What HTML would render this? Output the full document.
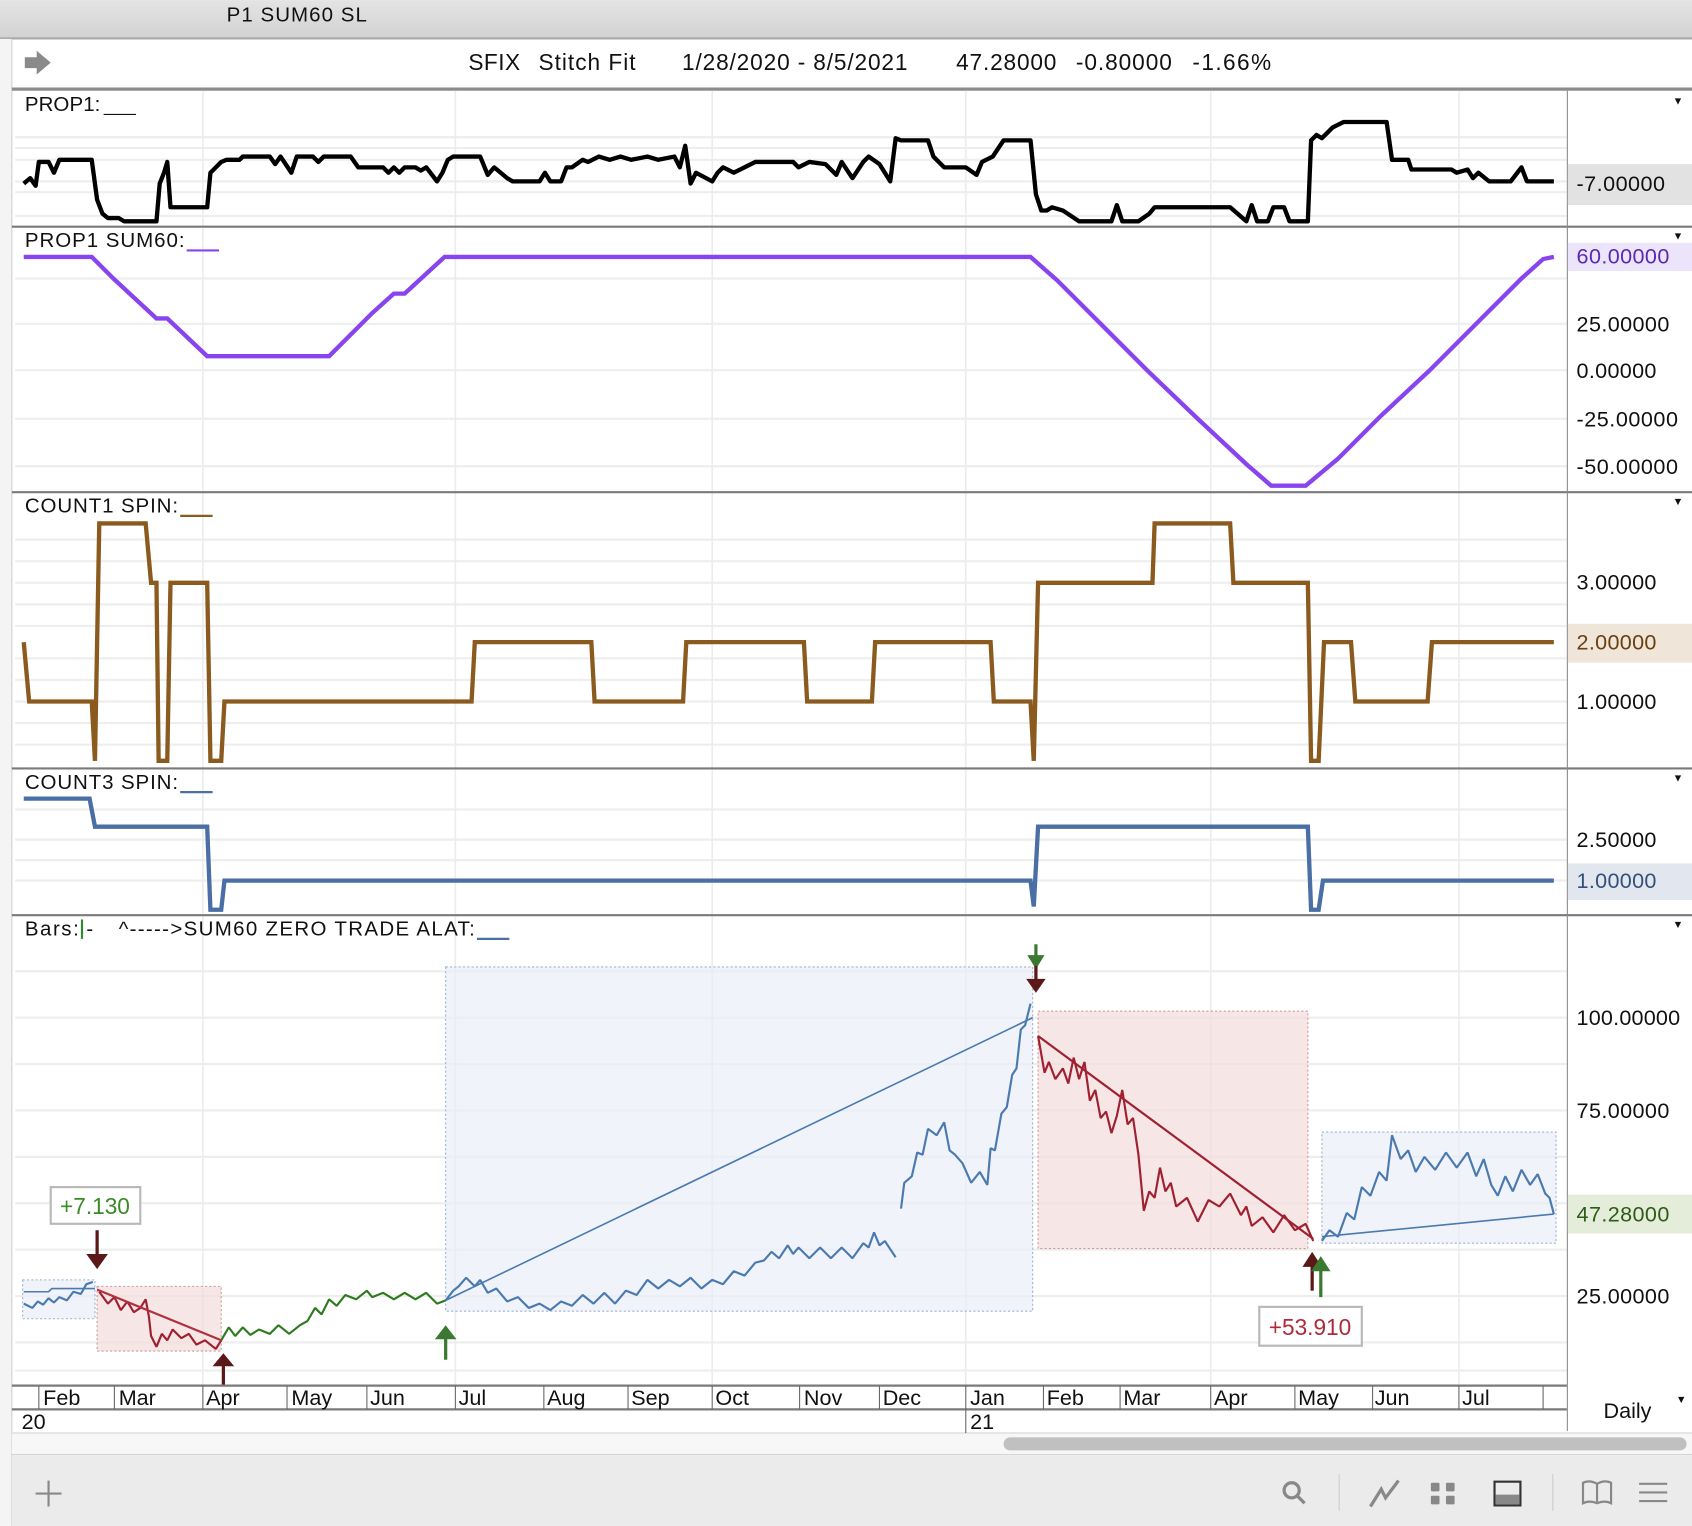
<!DOCTYPE html>
<html><head><meta charset="utf-8"><style>
html,body{margin:0;padding:0;background:#fff;overflow:hidden}
svg{display:block}
text{font-family:"Liberation Sans",sans-serif}
</style></head><body>
<svg width="1692" height="1526" viewBox="0 0 1568 1414" xmlns="http://www.w3.org/2000/svg">
<defs>
<linearGradient id="tb" x1="0" y1="0" x2="0" y2="1"><stop offset="0" stop-color="#e4e4e4"/><stop offset="1" stop-color="#d2d2d2"/></linearGradient>
</defs>
<rect width="1568" height="1414" fill="#fff"/>
<rect x="0" y="0" width="1568" height="35" fill="url(#tb)"/>
<line x1="0" y1="35.5" x2="1568" y2="35.5" stroke="#a8a8a8" stroke-width="2"/>
<text x="210" y="20" font-size="19" fill="#111" textLength="130">P1 SUM60 SL</text>
<rect x="0" y="36" width="11" height="1378" fill="#f4f4f4"/>
<line x1="11" y1="36" x2="11" y2="1414" stroke="#cfcfcf"/>
<polygon points="23,53 34,53 34,47 47,58 34,69 34,63 23,63" fill="#8a8a8a"/>
<g font-size="21" fill="#111">
<text x="434" y="65" textLength="48">SFIX</text>
<text x="499" y="65" textLength="90">Stitch Fit</text>
<text x="632" y="65" textLength="209">1/28/2020 - 8/5/2021</text>
<text x="886" y="65" textLength="93">47.28000</text>
<text x="997" y="65" textLength="89">-0.80000</text>
<text x="1105" y="65" textLength="73">-1.66%</text>
</g>
<rect x="11" y="81" width="1557" height="3" fill="#8c8c8c"/>

<g stroke="#eeeeee" stroke-width="2">
<line x1="14" x2="1452" y1="127" y2="127"/><line x1="14" x2="1452" y1="137" y2="137"/><line x1="14" x2="1452" y1="148" y2="148"/><line x1="14" x2="1452" y1="168" y2="168"/><line x1="14" x2="1452" y1="178" y2="178"/><line x1="14" x2="1452" y1="200" y2="200"/>
<line x1="14" x2="1452" y1="258" y2="258"/><line x1="14" x2="1452" y1="300" y2="300"/><line x1="14" x2="1452" y1="343" y2="343"/><line x1="14" x2="1452" y1="388" y2="388"/><line x1="14" x2="1452" y1="432" y2="432"/>
<line x1="14" x2="1452" y1="500" y2="500"/><line x1="14" x2="1452" y1="520" y2="520"/><line x1="14" x2="1452" y1="540" y2="540"/><line x1="14" x2="1452" y1="560" y2="560"/><line x1="14" x2="1452" y1="580" y2="580"/><line x1="14" x2="1452" y1="610" y2="610"/><line x1="14" x2="1452" y1="630" y2="630"/><line x1="14" x2="1452" y1="650" y2="650"/><line x1="14" x2="1452" y1="670" y2="670"/><line x1="14" x2="1452" y1="690" y2="690"/>
<line x1="14" x2="1452" y1="750" y2="750"/><line x1="14" x2="1452" y1="778" y2="778"/><line x1="14" x2="1452" y1="797" y2="797"/><line x1="14" x2="1452" y1="816" y2="816"/>
<line x1="14" x2="1452" y1="900" y2="900"/><line x1="14" x2="1452" y1="943" y2="943"/><line x1="14" x2="1452" y1="986" y2="986"/><line x1="14" x2="1452" y1="1029" y2="1029"/><line x1="14" x2="1452" y1="1072" y2="1072"/><line x1="14" x2="1452" y1="1115" y2="1115"/><line x1="14" x2="1452" y1="1158" y2="1158"/><line x1="14" x2="1452" y1="1201" y2="1201"/><line x1="14" x2="1452" y1="1244" y2="1244"/><line x1="14" x2="1452" y1="1270" y2="1270"/>
</g>
<g stroke="#ececec" stroke-width="1.5">
<line x1="188" x2="188" y1="84" y2="1284"/><line x1="422" x2="422" y1="84" y2="1284"/><line x1="660" x2="660" y1="84" y2="1284"/><line x1="895" x2="895" y1="84" y2="1284"/><line x1="1122" x2="1122" y1="84" y2="1284"/><line x1="1352" x2="1352" y1="84" y2="1284"/>
</g>

<g stroke="#7a7a7a" stroke-width="2">
<line x1="11" x2="1568" y1="210" y2="210"/><line x1="11" x2="1568" y1="456" y2="456"/><line x1="11" x2="1568" y1="712" y2="712"/><line x1="11" x2="1568" y1="848" y2="848"/>
</g>
<line x1="1452.5" x2="1452.5" y1="84" y2="1326" stroke="#8a8a8a" stroke-width="1"/>

<rect x="1453" y="152" width="115" height="38" fill="#e2e2e2"/>
<rect x="1453" y="225" width="115" height="26" fill="#ece4fb"/>
<rect x="1453" y="578" width="115" height="36" fill="#efe5d8"/>
<rect x="1453" y="800" width="115" height="34" fill="#e2e7ef"/>
<rect x="1453" y="1107" width="115" height="36" fill="#e4edd9"/>
<g font-size="20" fill="#111">
<text x="1461" y="177" textLength="82">-7.00000</text>
<text x="1461" y="244" fill="#5a2bb0" textLength="86">60.00000</text>
<text x="1461" y="307" textLength="86">25.00000</text>
<text x="1461" y="350" textLength="74">0.00000</text>
<text x="1461" y="395" textLength="94">-25.00000</text>
<text x="1461" y="439" textLength="94">-50.00000</text>
<text x="1461" y="546" textLength="74">3.00000</text>
<text x="1461" y="602" fill="#6a4010" textLength="74">2.00000</text>
<text x="1461" y="657" textLength="74">1.00000</text>
<text x="1461" y="785" textLength="74">2.50000</text>
<text x="1461" y="823" fill="#34507a" textLength="74">1.00000</text>
<text x="1461" y="950" textLength="96">100.00000</text>
<text x="1461" y="1036" textLength="86">75.00000</text>
<text x="1461" y="1132" fill="#2f5a18" textLength="86">47.28000</text>
<text x="1461" y="1208" textLength="86">25.00000</text>
</g>
<g fill="#111" font-size="10"><text x="1550" y="97">▼</text><text x="1550" y="222">▼</text><text x="1550" y="468">▼</text><text x="1550" y="724">▼</text><text x="1550" y="860">▼</text><text x="1553" y="1300">▼</text></g>

<g font-size="19" fill="#111">
<text x="23" y="103" textLength="70">PROP1:</text><line x1="96" x2="126" y1="106" y2="106" stroke="#111"/>
<text x="23" y="229" textLength="148">PROP1 SUM60:</text><line x1="173" x2="203" y1="232" y2="232" stroke="#8844ee" stroke-width="2"/>
<text x="23" y="475" textLength="142">COUNT1 SPIN:</text><line x1="167" x2="197" y1="478" y2="478" stroke="#8b5a1e" stroke-width="2"/>
<text x="23" y="731" textLength="142">COUNT3 SPIN:</text><line x1="167" x2="197" y1="734" y2="734" stroke="#4a6fa5" stroke-width="2"/>
<text x="23" y="867" textLength="50">Bars:</text><line x1="76" x2="76" y1="852" y2="870" stroke="#2e8b2e" stroke-width="2"/><text x="80" y="867">-</text>
<text x="110" y="867" textLength="330">^-----&gt;SUM60 ZERO TRADE  ALAT:</text><line x1="442" x2="472" y1="870" y2="870" stroke="#4a6fa5" stroke-width="2"/>
</g>

<polyline fill="none" stroke="#000" stroke-width="4" stroke-linejoin="round" points="22,170 28,165 33,172 36,150 45,150 50,160 55,148 85,148 90,185 95,198 100,202 110,202 115,205 145,205 148,170 152,160 155,150 158,192 192,192 195,160 200,155 205,150 210,148 222,148 225,145 250,145 255,152 260,145 270,160 275,145 290,145 295,150 300,145 325,145 332,155 355,155 360,160 365,155 370,160 375,155 385,155 390,158 395,155 405,168 410,160 415,148 420,145 445,145 452,162 458,155 470,165 475,168 500,168 505,160 510,168 520,168 525,155 530,155 540,148 545,150 555,145 565,148 575,145 585,148 600,145 610,148 625,145 630,155 635,135 640,170 645,160 660,168 665,160 670,155 680,160 690,155 700,150 735,150 740,155 750,150 765,152 775,162 780,150 790,165 800,150 805,145 815,152 825,168 830,128 835,130 860,130 865,145 875,155 895,155 905,162 910,150 920,145 930,130 955,130 960,180 965,195 970,195 975,192 985,195 1000,205 1030,205 1035,190 1040,205 1055,205 1065,198 1070,192 1140,192 1155,205 1160,190 1165,205 1175,205 1180,192 1190,192 1195,205 1212,205 1215,130 1220,125 1225,128 1235,118 1245,113 1285,113 1290,148 1305,148 1308,157 1345,157 1350,160 1360,157 1365,165 1370,160 1380,168 1400,168 1410,155 1415,168 1440,168"/>
<polyline fill="none" stroke="#8844ee" stroke-width="4" points="22,238 85,238 105,258 145,295 155,295 192,330 305,330 345,290 365,272 375,272 412,238 955,238 980,260 1020,300 1065,345 1110,388 1155,430 1178,450 1210,450 1240,425 1280,385 1325,343 1370,298 1410,258 1430,240 1440,238"/>
<polyline fill="none" stroke="#8b5a1e" stroke-width="4" points="22,595 27,650 85,650 88,705 92,485 135,485 140,540 145,540 147,705 155,705 158,540 192,540 195,705 205,705 208,650 437,650 440,595 548,595 551,650 633,650 636,595 745,595 748,650 808,650 811,595 918,595 921,650 955,650 958,705 962,540 1068,540 1070,485 1140,485 1143,540 1212,540 1215,705 1222,705 1227,595 1252,595 1256,650 1323,650 1327,595 1440,595"/>
<polyline fill="none" stroke="#4a6fa5" stroke-width="4" points="22,740 83,740 88,766 192,766 195,843 205,843 208,816 955,816 958,840 962,766 1212,766 1215,843 1222,843 1226,816 1440,816"/>

<g stroke-dasharray="2,2" stroke-width="1">
<rect x="21" y="1186" width="67" height="36" fill="#e9eef6" fill-opacity="0.7" stroke="#9fb2d2"/>
<rect x="90" y="1192" width="115" height="60" fill="#f2dcdc" fill-opacity="0.7" stroke="#d09a9a"/>
<rect x="413" y="896" width="544" height="319" fill="#e9eef6" fill-opacity="0.7" stroke="#9fb2d2"/>
<rect x="962" y="937" width="250" height="220" fill="#f2dcdc" fill-opacity="0.7" stroke="#d09a9a"/>
<rect x="1225" y="1049" width="217" height="103" fill="#e9eef6" fill-opacity="0.7" stroke="#9fb2d2"/>
</g>
<g fill="none" stroke-width="2" stroke-linejoin="bevel">
<polyline stroke="#4a7ab0" points="22,1208 30,1212 35,1206 40,1209 45,1203 50,1207 55,1202 62,1205 68,1197 75,1199 80,1190 86,1188"/>
<polyline stroke="#4a7ab0" stroke-width="1.5" points="22,1197 45,1197 48,1194 88,1194"/>
<polyline stroke="#a02030" points="92,1197 100,1208 106,1202 112,1214 118,1206 124,1216 130,1212 135,1204 138,1220 140,1238 145,1248 150,1236 155,1242 160,1232 168,1240 175,1236 182,1246 190,1242 200,1250 205,1242"/>
<polyline stroke="#2e7a1e" points="205,1242 212,1230 218,1238 225,1230 232,1237 240,1232 250,1236 258,1228 268,1236 278,1228 285,1224 292,1212 298,1218 305,1204 312,1210 320,1200 330,1204 340,1196 345,1202 355,1198 365,1204 375,1198 385,1204 395,1198 405,1208 413,1205"/>
<polyline stroke="#4a7ab0" points="413,1205 420,1196 425,1192 432,1184 440,1192 445,1186 452,1198 460,1194 470,1206 480,1202 490,1212 500,1208 510,1214 520,1206 530,1210 540,1200 550,1208 560,1198 570,1208 580,1196 590,1200 600,1186 610,1194 620,1186 630,1192 640,1184 650,1194 660,1186 670,1190 680,1178 690,1182 700,1170 708,1168 715,1160 722,1166 730,1154 735,1162 740,1156 750,1166 760,1156 770,1166 780,1156 790,1166 800,1152 805,1156 810,1142 815,1154 820,1150 830,1165"/>
<polyline stroke="#4a7ab0" points="835,1120 838,1096 845,1090 850,1068 855,1070 860,1046 868,1052 875,1040 880,1066 885,1070 892,1078 900,1096 908,1086 915,1098 918,1064 922,1066 928,1032 933,1026 938,996 942,990 946,954 950,950 955,930"/>
<polyline stroke="#a02030" points="962,960 968,994 972,984 978,1000 985,990 990,1004 995,980 1000,1000 1005,984 1010,1020 1015,1010 1020,1036 1025,1030 1030,1050 1035,1034 1040,1010 1045,1042 1050,1036 1055,1070 1060,1122 1065,1104 1070,1110 1075,1082 1080,1104 1085,1096 1090,1118 1100,1110 1110,1132 1120,1112 1130,1118 1140,1106 1150,1126 1155,1118 1160,1136 1170,1128 1180,1142 1190,1126 1200,1140 1210,1134 1217,1150"/>
<polyline stroke="#4a7ab0" points="1225,1150 1232,1140 1240,1146 1248,1124 1255,1130 1262,1100 1270,1108 1278,1086 1285,1094 1290,1052 1298,1074 1305,1066 1312,1086 1320,1072 1330,1084 1340,1068 1350,1082 1360,1068 1368,1090 1375,1074 1382,1098 1388,1108 1395,1090 1402,1104 1410,1084 1418,1098 1425,1088 1432,1106 1436,1110 1440,1125"/>
</g>
<line x1="90" y1="1195" x2="205" y2="1242" stroke="#b03040" stroke-width="2"/>
<line x1="413" y1="1205" x2="957" y2="943" stroke="#4a7ab0" stroke-width="1.5"/>
<line x1="962" y1="960" x2="1217" y2="1148" stroke="#a02030" stroke-width="2"/>
<line x1="1225" y1="1146" x2="1440" y2="1125" stroke="#4a7ab0" stroke-width="1.5"/>

<g stroke-width="3">
<line x1="90" y1="1140" x2="90" y2="1165" stroke="#5a1818"/><polygon points="80,1162 100,1162 90,1176" fill="#5a1818"/>
<line x1="207" y1="1265" x2="207" y2="1284" stroke="#5a1818"/><polygon points="197,1266 217,1266 207,1254" fill="#5a1818"/>
<line x1="413" y1="1240" x2="413" y2="1260" stroke="#3a7a30"/><polygon points="403,1241 423,1241 413,1228" fill="#3a7a30"/>
<line x1="960" y1="875" x2="960" y2="890" stroke="#3a7a30"/><polygon points="952,885 968,885 960,898" fill="#3a7a30"/>
<line x1="960" y1="895" x2="960" y2="910" stroke="#5a1818"/><polygon points="951,907 969,907 960,920" fill="#5a1818"/>
<line x1="1216" y1="1172" x2="1216" y2="1196" stroke="#5a1818"/><polygon points="1207,1174 1225,1174 1216,1160" fill="#5a1818"/>
<line x1="1224" y1="1176" x2="1224" y2="1202" stroke="#3a7a30"/><polygon points="1215,1178 1233,1178 1224,1164" fill="#3a7a30"/>
</g>
<rect x="47" y="1100" width="83" height="34" fill="#fff" stroke="#b8b8b8" stroke-width="2"/>
<text x="88" y="1125" font-size="21" fill="#3a8a28" text-anchor="middle">+7.130</text>
<rect x="1167" y="1211" width="95" height="36" fill="#fff" stroke="#b8b8b8" stroke-width="2"/>
<text x="1214" y="1237" font-size="21" fill="#b02a3a" text-anchor="middle">+53.910</text>

<line x1="11" x2="1452" y1="1284" y2="1284" stroke="#7a7a7a" stroke-width="2"/>
<line x1="11" x2="1452" y1="1306" y2="1306" stroke="#7a7a7a" stroke-width="2"/>
<line x1="11" x2="1568" y1="1328" y2="1328" stroke="#e6e6e6" stroke-width="2"/>
<g stroke="#666" stroke-width="1">
<line x1="36" x2="36" y1="1284" y2="1306"/><line x1="106" x2="106" y1="1284" y2="1306"/><line x1="188" x2="188" y1="1284" y2="1306"/><line x1="266" x2="266" y1="1284" y2="1306"/><line x1="340" x2="340" y1="1284" y2="1306"/><line x1="422" x2="422" y1="1284" y2="1306"/><line x1="504" x2="504" y1="1284" y2="1306"/><line x1="582" x2="582" y1="1284" y2="1306"/><line x1="660" x2="660" y1="1284" y2="1306"/><line x1="741" x2="741" y1="1284" y2="1306"/><line x1="815" x2="815" y1="1284" y2="1306"/><line x1="895" x2="895" y1="1284" y2="1328"/><line x1="967" x2="967" y1="1284" y2="1306"/><line x1="1038" x2="1038" y1="1284" y2="1306"/><line x1="1122" x2="1122" y1="1284" y2="1306"/><line x1="1200" x2="1200" y1="1284" y2="1306"/><line x1="1272" x2="1272" y1="1284" y2="1306"/><line x1="1352" x2="1352" y1="1284" y2="1306"/><line x1="1430" x2="1430" y1="1284" y2="1306"/>
</g>
<g font-size="20" fill="#111">
<text x="40" y="1302">Feb</text><text x="110" y="1302">Mar</text><text x="191" y="1302">Apr</text><text x="270" y="1302">May</text><text x="343" y="1302">Jun</text><text x="425" y="1302">Jul</text><text x="507" y="1302">Aug</text><text x="585" y="1302">Sep</text><text x="663" y="1302">Oct</text><text x="745" y="1302">Nov</text><text x="818" y="1302">Dec</text><text x="899" y="1302">Jan</text><text x="970" y="1302">Feb</text><text x="1041" y="1302">Mar</text><text x="1125" y="1302">Apr</text><text x="1203" y="1302">May</text><text x="1274" y="1302">Jun</text><text x="1355" y="1302">Jul</text>
<text x="20" y="1324">20</text><text x="899" y="1324">21</text>
<text x="1486" y="1314">Daily</text>
</g>
<rect x="11" y="1329" width="1557" height="19" fill="#f7f7f7"/>
<rect x="930" y="1332" width="633" height="12" rx="6" fill="#c0c0c0"/>
<line x1="11" x2="1568" y1="1348" y2="1348" stroke="#cfcfcf"/>
<rect x="11" y="1349" width="1557" height="65" fill="#ebebeb"/>
<g stroke="#888" stroke-width="2" fill="none">
<line x1="45" y1="1372" x2="45" y2="1396"/><line x1="33" y1="1384" x2="57" y2="1384"/>
<circle cx="1197" cy="1381" r="7" stroke-width="3"/><line x1="1202" y1="1386" x2="1209" y2="1393" stroke-width="3"/>
<line x1="1241" y1="1366" x2="1241" y2="1400" stroke="#ccc" stroke-width="1"/>
<polyline points="1270,1396 1280,1380 1284,1388 1296,1372" stroke-width="3"/>
<rect x="1385" y="1373" width="24" height="22" stroke="#333"/>
<line x1="1439" y1="1366" x2="1439" y2="1400" stroke="#ccc" stroke-width="1"/>
<path d="M1467,1374 Q1473,1371 1480,1375 Q1487,1371 1493,1374 V1393 Q1487,1390 1480,1393 Q1473,1390 1467,1393 Z M1480,1375 V1393"/>
<line x1="1519" y1="1375" x2="1545" y2="1375"/><line x1="1519" y1="1383" x2="1545" y2="1383"/><line x1="1519" y1="1391" x2="1545" y2="1391"/>
</g>
<rect x="1386" y="1385" width="22" height="9" fill="#888"/>
<g fill="#888"><rect x="1326" y="1374" width="8" height="8" rx="1"/><rect x="1340" y="1374" width="8" height="8" rx="1"/><rect x="1326" y="1386" width="8" height="8" rx="1"/><rect x="1340" y="1386" width="8" height="8" rx="1"/></g>
</svg>
</body></html>
